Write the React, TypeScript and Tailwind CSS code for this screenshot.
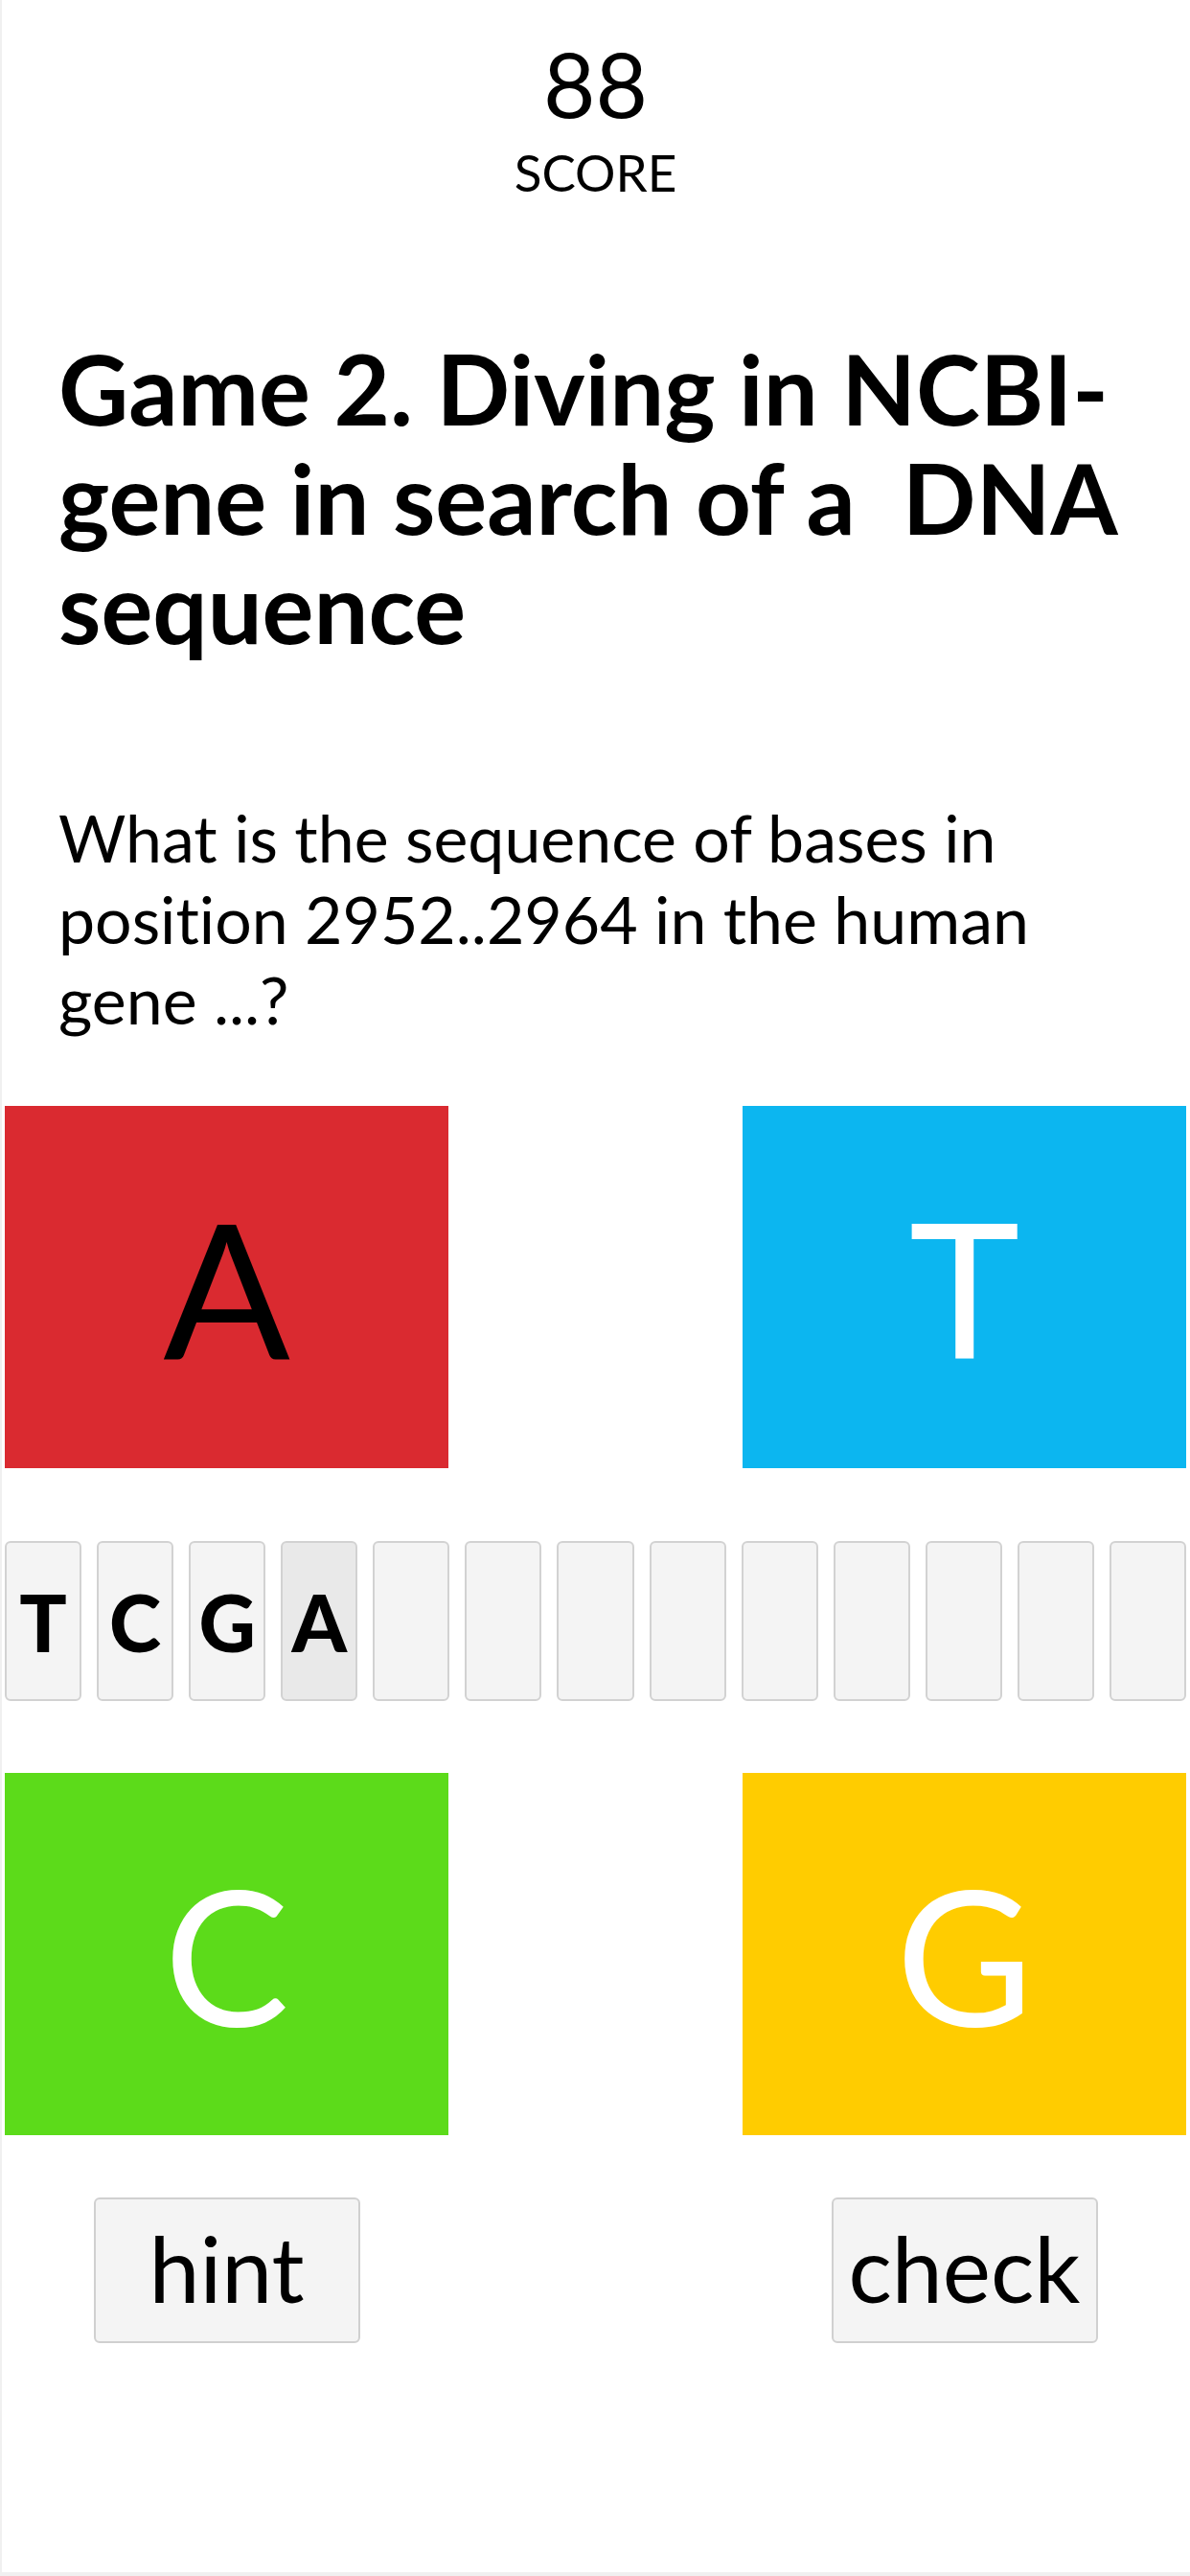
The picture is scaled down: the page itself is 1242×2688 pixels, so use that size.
const sequence = ["T", "C", "G", "A", "", "", "", "", "", "", "", "", ""];
const activeIndex = 3;

function BaseButton({ letter, className }: { letter: string; className: string }) {
  return (
    <button
      className={`flex h-[378px] w-[463px] items-center justify-center text-[196px] leading-none ${className}`}
    >
      {letter}
    </button>
  );
}

function Tile({ letter, active }: { letter: string; active: boolean }) {
  return (
    <div
      className={`flex h-[167px] flex-1 items-center justify-center rounded-md border-2 border-[#d2d2d2] text-[82px] font-black leading-none text-black ${
        active ? "bg-[#e9e9e9]" : "bg-[#f4f4f4]"
      }`}
    >
      {letter}
    </div>
  );
}

function ActionButton({ label }: { label: string }) {
  return (
    <div className="flex w-[463px] justify-center">
      <button className="flex h-[152px] w-[278px] items-center justify-center rounded-md border-2 border-[#d0d0d0] bg-[#f4f4f4] pb-[6px] text-[95px] leading-none text-black">
        {label}
      </button>
    </div>
  );
}

export default function App() {
  return (
    <div
      className="min-h-[2688px] w-full border-b-4 border-l-2 border-[#f0f0f0] bg-white pl-[3px] pr-[4px] text-black [font-variant-ligatures:none]"
      style={{ fontFamily: "Lato, 'Noto Sans', sans-serif" }}
    >
      <div className="flex flex-col items-center pt-[31px]">
        <p className="text-[94px] leading-[1.2]">88</p>
        <p className="mt-[4px] text-[53px] leading-[1.2]">SCORE</p>
      </div>

      <h1 className="mt-[137px] px-[56px] text-[101px] font-bold leading-[114px]">
        Game 2. Diving in NCBI-gene in search of a&nbsp; DNA sequence
      </h1>

      <p className="mt-[142px] px-[56px] text-[68px] leading-[1.24]">
        What is the sequence of bases in position 2952..2964 in the human gene ...?
      </p>

      <div className="mt-[69px] flex justify-between">
        <BaseButton letter="A" className="bg-[#da2a30] text-black" />
        <BaseButton letter="T" className="bg-[#0cb6f0] text-white" />
      </div>

      <div className="mt-[76px] flex gap-4">
        {sequence.map((letter, i) => (
          <Tile key={i} letter={letter} active={i === activeIndex} />
        ))}
      </div>

      <div className="mt-[75px] flex justify-between">
        <BaseButton letter="C" className="bg-[#5cdb1a] text-white" />
        <BaseButton letter="G" className="bg-[#ffcc00] text-white" />
      </div>

      <div className="mt-[65px] flex justify-between">
        <ActionButton label="hint" />
        <ActionButton label="check" />
      </div>
    </div>
  );
}
